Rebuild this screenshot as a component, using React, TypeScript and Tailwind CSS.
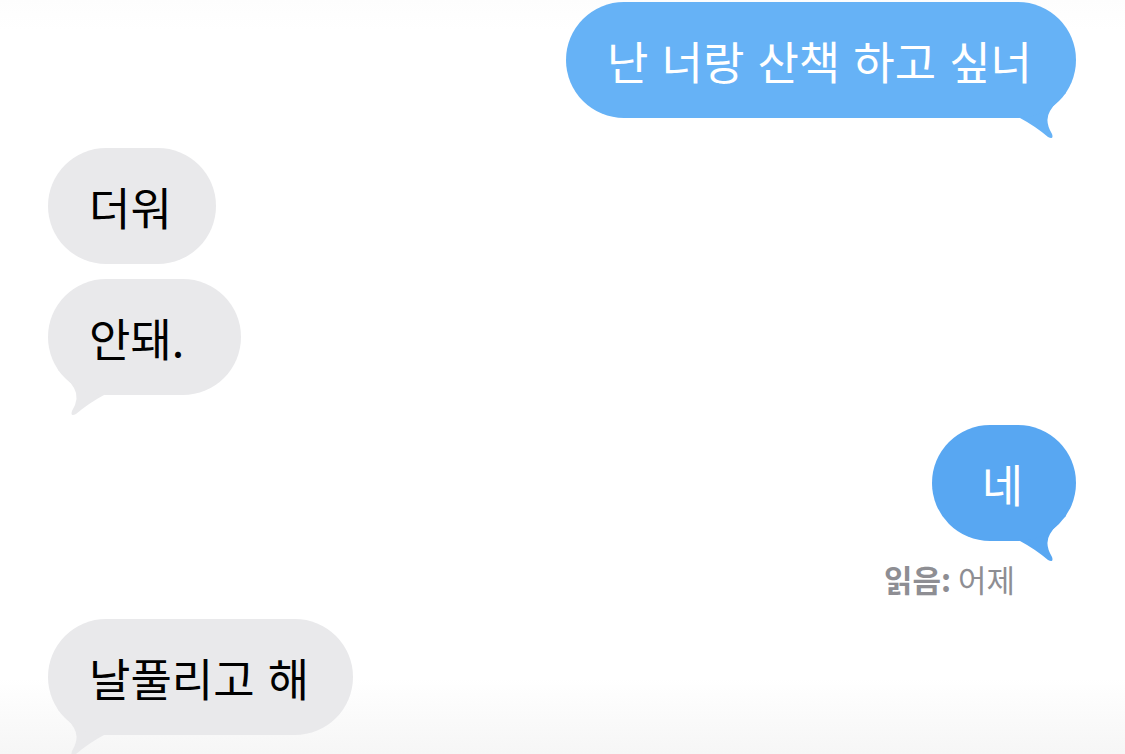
import React from "react";

const FONT = { fontFamily: '"Noto Sans CJK KR", "Noto Sans", sans-serif' };

function Tail({ color, side }: { color: string; side: "left" | "right" }) {
  const pos = side === "right" ? "right-[-4px]" : "left-[-4px] -scale-x-100";
  return (
    <svg
      className={`absolute bottom-[-23px] ${pos}`}
      width="80"
      height="60"
      viewBox="0 0 80 60"
    >
      <path
        d="M10 28 L20 37 Q35 45 48 56 Q54 59 52 53 Q44 40 50 30 Q56 20 66 12 L60 0 L10 0 Z"
        fill={color}
      />
    </svg>
  );
}

function Bubble({
  text,
  side,
  color,
  tail,
  className = "",
  pad = "pr-[44px]",
}: {
  text: string;
  side: "left" | "right";
  color: "blue1" | "blue2" | "gray";
  tail?: boolean;
  className?: string;
  pad?: string;
}) {
  const bg =
    color === "blue1" ? "bg-[#66b2f6]" : color === "blue2" ? "bg-[#58a7f2]" : "bg-[#e9e9eb]";
  const hex = color === "blue1" ? "#66b2f6" : color === "blue2" ? "#58a7f2" : "#e9e9eb";
  const fg = color === "gray" ? "text-black" : "text-white";
  return (
    <div className={`relative ${side === "right" ? "self-end" : "self-start"} ${className}`}>
      {tail && <Tail color={hex} side={side} />}
      <div
        className={`relative ${bg} ${fg} h-[116px] min-w-[144px] rounded-[58px] pl-[41px] ${pad} flex items-center justify-center text-[45px] leading-none whitespace-pre [word-spacing:3px]`}
        style={FONT}
      >
        {text}
      </div>
    </div>
  );
}

export default function App() {
  return (
    <div
      className="w-[1125px] h-[754px] overflow-hidden bg-[linear-gradient(to_bottom,#fdfdfd_0%,#ffffff_4%,#ffffff_90%,#f6f6f6_100%)]"
      style={FONT}
    >
      <div className="flex flex-col pl-[48px] pr-[49px] pt-[2px]">
        <Bubble text="난 너랑 산책 하고 싶너" side="right" color="blue1" tail />
        <Bubble text="더워" side="left" color="gray" className="mt-[30px]" />
        <Bubble text="안돼." side="left" color="gray" tail className="mt-[15px]" pad="pr-[57px]" />
        <Bubble text="네" side="right" color="blue2" tail className="mt-[30px]" />
        <div className="self-end mr-[61px] mt-[22px] text-[31px] leading-none text-[#8e8e93]">
          <span className="font-bold">읽음:</span> 어제
        </div>
        <Bubble text="날풀리고 해" side="left" color="gray" tail className="mt-[25px]" />
      </div>
    </div>
  );
}
